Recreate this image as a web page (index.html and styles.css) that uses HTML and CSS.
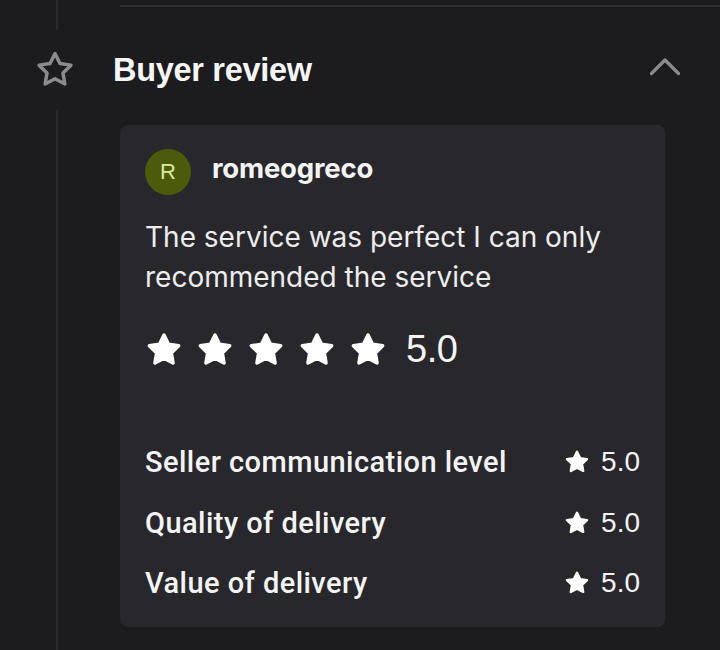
FILE: index.html
```html
<!DOCTYPE html>
<html>
<head>
<meta charset="utf-8">
<link rel="stylesheet" href="styles.css">
</head>
<body>
<div class="page">
  <div class="top">
    <div class="rail-seg"></div>
    <div class="hr"></div>
  </div>
  <div class="header">
    <svg class="star-outline" viewBox="0 0 24 24" width="44" height="44"><path d="M12 3l2.7 5.5 6 .85-4.35 4.250 1.03 6L12 16.75 6.62 19.6l1.03-6L3.3 9.35l6-.85z" fill="none" stroke="#8b8b90" stroke-width="1.9" stroke-linejoin="round"/></svg>
    <h2 class="title">Buyer review</h2>
    <svg class="chevron" viewBox="0 0 32 20" width="32" height="20"><path d="M2.5 17.5L16 4l13.5 13.5" fill="none" stroke="#8b8b90" stroke-width="3.2" stroke-linecap="round" stroke-linejoin="round"/></svg>
  </div>
  <div class="body">
    <div class="rail"></div>
    <div class="card">
      <div class="user">
        <div class="avatar">R</div>
        <div class="name">romeogreco</div>
      </div>
      <p class="text">The service was perfect I can only recommended the service</p>
      <div class="rating">
        <div class="stars">
          <svg viewBox="0 0 24 24" class="s"><path d="M12 2.6l2.85 5.8 6.4.93-4.630 4.5 1.1 6.37L12 17.2l-5.72 3 1.1-6.37-4.63-4.5 6.4-.93z" fill="#fff" stroke="#fff" stroke-width="2.2" stroke-linejoin="round"/></svg>
          <svg viewBox="0 0 24 24" class="s"><path d="M12 2.6l2.85 5.8 6.4.93-4.630 4.5 1.1 6.37L12 17.2l-5.72 3 1.1-6.37-4.63-4.5 6.4-.93z" fill="#fff" stroke="#fff" stroke-width="2.2" stroke-linejoin="round"/></svg>
          <svg viewBox="0 0 24 24" class="s"><path d="M12 2.6l2.85 5.8 6.4.93-4.630 4.5 1.1 6.37L12 17.2l-5.72 3 1.1-6.37-4.63-4.5 6.4-.93z" fill="#fff" stroke="#fff" stroke-width="2.2" stroke-linejoin="round"/></svg>
          <svg viewBox="0 0 24 24" class="s"><path d="M12 2.6l2.85 5.8 6.4.93-4.630 4.5 1.1 6.37L12 17.2l-5.72 3 1.1-6.37-4.63-4.5 6.4-.93z" fill="#fff" stroke="#fff" stroke-width="2.2" stroke-linejoin="round"/></svg>
          <svg viewBox="0 0 24 24" class="s"><path d="M12 2.6l2.85 5.8 6.4.93-4.630 4.5 1.1 6.37L12 17.2l-5.72 3 1.1-6.37-4.63-4.5 6.4-.93z" fill="#fff" stroke="#fff" stroke-width="2.2" stroke-linejoin="round"/></svg>
        </div>
        <span class="score">5.0</span>
      </div>
      <div class="rows">
        <div class="row"><span class="label">Seller communication level</span><span class="val"><svg viewBox="0 0 24 24" class="ss"><path d="M12 2.6l2.85 5.8 6.4.93-4.630 4.5 1.1 6.37L12 17.2l-5.72 3 1.1-6.37-4.63-4.5 6.4-.93z" fill="#fff" stroke="#fff" stroke-width="2.2" stroke-linejoin="round"/></svg>5.0</span></div>
        <div class="row"><span class="label">Quality of delivery</span><span class="val"><svg viewBox="0 0 24 24" class="ss"><path d="M12 2.6l2.85 5.8 6.4.93-4.630 4.5 1.1 6.37L12 17.2l-5.72 3 1.1-6.37-4.63-4.5 6.4-.93z" fill="#fff" stroke="#fff" stroke-width="2.2" stroke-linejoin="round"/></svg>5.0</span></div>
        <div class="row"><span class="label">Value of delivery</span><span class="val"><svg viewBox="0 0 24 24" class="ss"><path d="M12 2.6l2.85 5.8 6.4.93-4.630 4.5 1.1 6.37L12 17.2l-5.72 3 1.1-6.37-4.63-4.5 6.4-.93z" fill="#fff" stroke="#fff" stroke-width="2.2" stroke-linejoin="round"/></svg>5.0</span></div>
      </div>
    </div>
  </div>
</div>
</body>
</html>
```
FILE: styles.css
```css
html, body { margin: 0; padding: 0; }
body {
  background: #1c1c1f;
  color: #f4f4f5;
  font-family: "Liberation Sans", Arial, sans-serif;
  width: 720px;
  height: 650px;
  overflow: hidden;
}
.page { display: flex; flex-direction: column; }
.top { display: flex; height: 30px; }
.rail-seg { width: 2px; margin-left: 56px; background: #2a2a2e; }
.hr { flex: 1; margin-left: 62px; height: 2px; margin-top: 5px; background: #2e2e33; }
.header { display: flex; align-items: center; height: 80px; }
.star-outline { margin-left: 33px; }
.title {
  margin: 0 0 0 36px;
  font-size: 32.5px;
  font-weight: 700;
  letter-spacing: -0.3px;
  flex: 1;
  color: #f6f6f7;
}
.chevron { margin-right: 39px; margin-top: -8px; }
.body { display: flex; height: 540px; }
.rail { width: 2px; margin-left: 56px; background: #2a2a2e; }
.card {
  margin-left: 62px;
  margin-top: 15px;
  width: 545px;
  height: 502px;
  box-sizing: border-box;
  background: #28282c;
  border-radius: 8px;
  padding: 24px 25px 0 25px;
}
.user { display: flex; align-items: center; }
.avatar {
  width: 46px; height: 46px; border-radius: 50%;
  background: #4b5b0b;
  color: #d9ec9c;
  display: flex; align-items: center; justify-content: center;
  font-size: 22px;
}
.name {
  margin-left: 21px;
  margin-top: -8px;
  font-family: "Inter", sans-serif;
  font-weight: 700;
  font-size: 27.5px;
  letter-spacing: -0.2px;
}
.text {
  margin: 22px 0 0 0;
  font-family: "Inter", sans-serif;
  font-size: 28px;
  line-height: 40px;
  font-weight: 400;
  color: #ededee;
}
.rating { display: flex; align-items: center; margin-top: 31px; }
.stars { display: flex; gap: 13px; }
.s { width: 38px; height: 38px; }
.score { margin-left: 19px; font-size: 38px; letter-spacing: -0.5px; }
.rows { margin-top: 61px; display: flex; flex-direction: column; }
.row { display: flex; justify-content: space-between; align-items: center; height: 60.5px; font-size: 28px; }
.label { font-family: "Roboto", sans-serif; font-weight: 500; font-size: 29px; letter-spacing: 0.45px; }
.val { display: flex; align-items: center; gap: 11px; font-size: 28px; }
.ss { width: 26px; height: 26px; }
```
